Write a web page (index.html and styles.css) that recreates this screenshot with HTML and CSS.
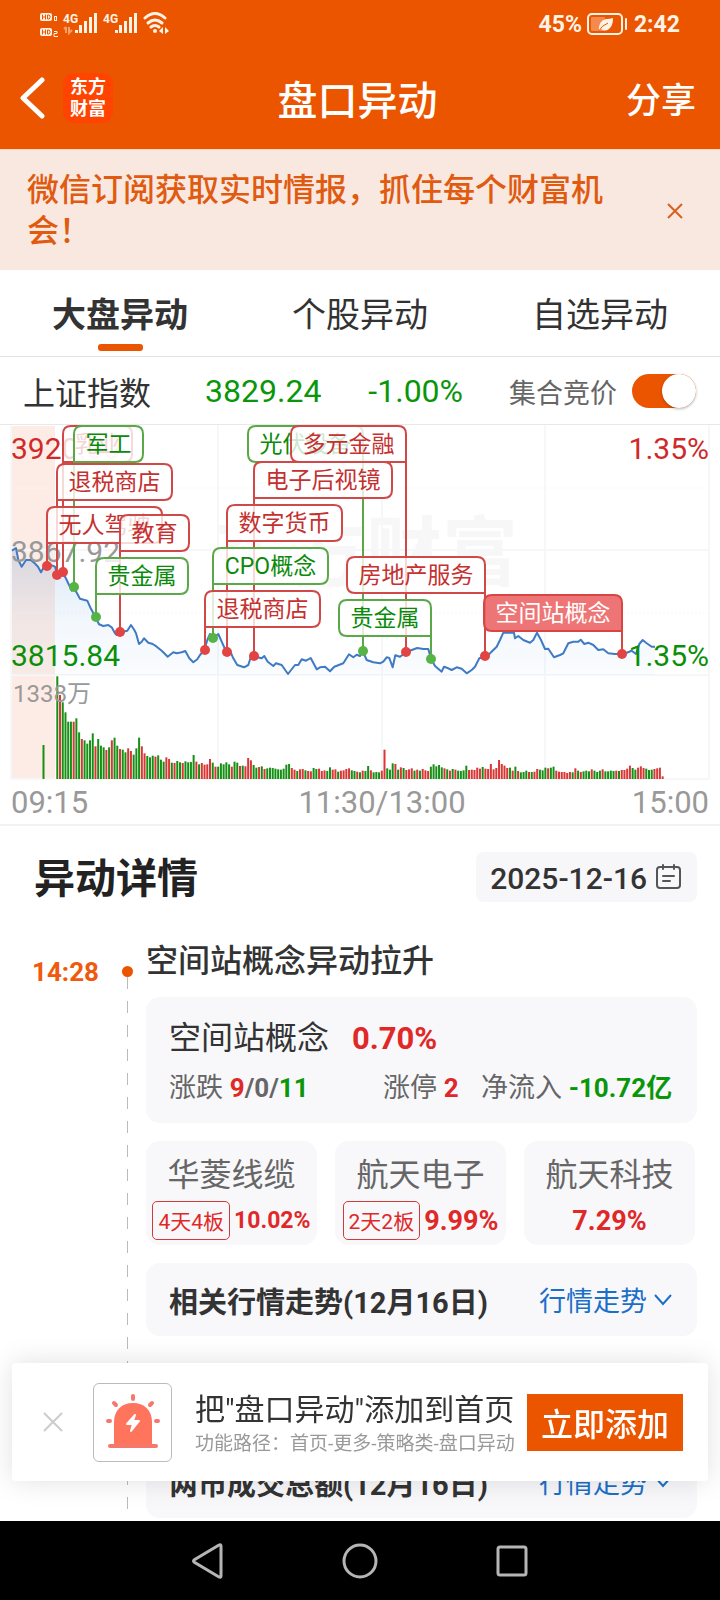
FILE: index.html
```html
<!DOCTYPE html>
<html lang="zh-CN">
<head>
  <meta charset="UTF-8">
  <meta name="viewport" content="width=device-width, initial-scale=1.0">
  <title>盘口异动</title>
  <link rel="stylesheet" href="styles.css">
</head>
<body>
  <header class="top">
    <div class="status">
      <svg class="status-icons" width="134" height="26" viewBox="0 0 134 26" fill="#fff3e6">
        <rect x="0" y="2" width="12" height="8" rx="2"/>
        <rect x="0" y="17" width="12" height="8" rx="2"/>
        <g fill="none" stroke="#eb5500" stroke-width="1">
          <path d="M2.500 3.500v5M5.500 3.500v5M2.500 6h3M7.500 4h1.500l1 1v2l-1 1h-1.500z"/>
          <path d="M2.500 18.500v5M5.500 18.500v5M2.500 21h3M7.500 19h1.500l1 1v2l-1 1h-1.500z"/>
        </g>
        <g fill="none" stroke="#fff3e6">
          <rect x="14.500" y="5.500" width="2" height="4"/>
          <path d="M14 20.500h3v2h-3v3h4"/>
        </g>
        <text class="net" x="23" y="12">4G</text>
        <path d="M26 16v6M24 18l2-2M29 16v6l3-3" stroke="#f7a06c" fill="none" stroke-width="2"/>
        <path d="M35 19h3v3h-3zM39 14h3v8h-3zM44 10h3v12h-3zM49 6h3v16h-3zM54 2h3v20h-3z"/>
        <text class="net" x="63" y="12">4G</text>
        <path d="M75 19h3v3h-3zM79 14h3v8h-3zM84 10h3v12h-3zM89 6h3v16h-3zM94 2h3v20h-3z"/>
        <g fill="none" stroke="#fff3e6" stroke-width="3" stroke-linecap="round">
          <path d="M105 7q10-9 20 0"/>
          <path d="M108 12q7-6 14 0"/>
          <path d="M111 16q4-3 8 0"/>
        </g>
        <circle cx="115" cy="20" r="2"/>
        <path d="M119 20l4-4v7zM125 16l4 4-4 3z"/>
      </svg>
      <div class="status-right">
        <span>45%</span>
        <svg width="42" height="22" viewBox="0 0 42 22">
          <rect x="1" y="1" width="34" height="20" rx="4" fill="none" stroke="#fff3e6" stroke-width="2"/>
          <rect x="4" y="4" width="14" height="14" rx="1" fill="#f58a4f"/>
          <path d="M12 18q-1-10 7-12q4 0 7-1q0 8-4 11q-4 3-8 0z" fill="#fff3e6"/>
          <path d="M11 19q4-7 10-9" stroke="#eb5500" fill="none"/>
          <rect x="38" y="5" width="2" height="12" rx="1" fill="#fff3e6"/>
        </svg>
        <span>2:42</span>
      </div>
    </div>
    <div class="navbar">
      <div class="navbar-left">
        <button class="back" aria-label="返回">
          <svg width="26" height="42" viewBox="0 0 26 42"><path d="M23 3L4 21l19 18" fill="none" stroke="#fff" stroke-width="5" stroke-linecap="round" stroke-linejoin="round"/></svg>
        </button>
        <div class="logo">东方<br>财富</div>
      </div>
      <h1>盘口异动</h1>
      <button class="share">分享</button>
    </div>
  </header>

  <div class="notice">
    <p>微信订阅获取实时情报，抓住每个财富机会！</p>
    <button class="notice-close" aria-label="关闭">
      <svg width="16" height="16" viewBox="0 0 16 16"><path d="M1 1l14 14M15 1L1 15" stroke="#d9601f" stroke-width="2" fill="none"/></svg>
    </button>
  </div>

  <nav class="tabs">
    <a class="active" href="#">大盘异动</a>
    <a href="#">个股异动</a>
    <a href="#">自选异动</a>
  </nav>

  <div class="index-row">
    <span class="index-name">上证指数</span>
    <span class="index-value green">3829.24</span>
    <span class="index-rate green">-1.00%</span>
    <label class="auction">集合竞价<input type="checkbox" class="switch" checked></label>
  </div>

  <section class="chart">
    <svg id="chart" viewBox="0 0 720 399">
      <defs>
        <linearGradient id="area" x1="0" y1="0" x2="0" y2="1">
          <stop offset="0" stop-color="#3b7cc9" stop-opacity=".2"/>
          <stop offset=".6" stop-color="#5a9be0" stop-opacity=".07"/>
          <stop offset="1" stop-color="#5a9be0" stop-opacity=".03"/>
        </linearGradient>
      </defs>
      <rect x="12" y="1" width="43" height="353" fill="#fdece5"/>
      <text class="mark" x="214" y="155">东方财富</text>
      <g class="grid">
        <path d="M11 0v354M218 0v354M382 0v354M545 0v354M709 0v354"/>
        <path d="M11 125h698M11 250h698M11 354h698"/>
        <path d="M11 63h698M11 188h698" stroke-width="1" stroke-dasharray="2 2"/>
      </g>
      <g id="volume"></g>
      <polygon id="priceArea" fill="url(#area)"/>
      <polyline id="priceLine" class="price"/>
      <g class="axis">
        <g class="level">
          <text class="red" x="11" y="34">3920.00</text>
          <text class="grey" x="11" y="137">3867.92</text>
          <text class="green" x="11" y="241">3815.84</text>
          <text class="red end" x="709" y="34">1.35%</text>
          <text class="green end" x="709" y="241">1.35%</text>
        </g>
        <text class="grey small" x="13" y="277">1338万</text>
        <text class="grey" x="11" y="388">09:15</text>
        <text class="grey middle" x="382" y="388">11:30/13:00</text>
        <text class="grey end" x="709" y="388">15:00</text>
      </g>
      <g id="flags"></g>
      <g id="dots"></g>
    </svg>
  </section>

  <main>
    <div class="detail-head">
      <h2>异动详情</h2>
      <button class="date">2025-12-16
        <svg width="26" height="26" viewBox="0 0 26 26" fill="none" stroke="#555" stroke-width="2" stroke-linecap="round"><rect x="1" y="3" width="23" height="21" rx="3"/><path d="M7 1v4M18 1v4M7 12h11M7 17h7"/></svg>
      </button>
    </div>

    <article class="event">
      <div class="rail"><time>14:28</time><i class="dot"></i></div>
      <div class="event-body">
        <h3>空间站概念异动拉升</h3>
        <div class="card board">
          <div class="board-name">空间站概念<b class="red">0.70%</b></div>
          <div class="board-stats">
            <span>涨跌 <b><i class="red">9</i>/0/<i class="green">11</i></b></span>
            <span>涨停 <b class="red">2</b></span>
            <span>净流入 <b class="green">-10.72亿</b></span>
          </div>
        </div>
        <div class="stocks">
          <div class="card stock">
            <div class="stock-name">华菱线缆</div>
            <div class="stock-rate"><span class="tag">4天4板</span><b class="long">10.02%</b></div>
          </div>
          <div class="card stock">
            <div class="stock-name">航天电子</div>
            <div class="stock-rate"><span class="tag">2天2板</span><b>9.99%</b></div>
          </div>
          <div class="card stock">
            <div class="stock-name">航天科技</div>
            <div class="stock-rate"><b>7.29%</b></div>
          </div>
        </div>
        <div class="card trend">
          <b>相关行情走势(12月16日)</b>
          <a href="#">行情走势<svg width="20" height="14" viewBox="0 0 20 14"><path d="M2 2l8 9 8-9" fill="none" stroke="#1b6fc8" stroke-width="2"/></svg></a>
        </div>
      </div>
    </article>

    <article class="event next">
      <div class="rail"></div>
      <div class="event-body">
        <div class="card trend">
          <b>两市成交总额(12月16日)</b>
          <a href="#">行情走势<svg width="20" height="14" viewBox="0 0 20 14"><path d="M2 2l8 9 8-9" fill="none" stroke="#1b6fc8" stroke-width="2"/></svg></a>
        </div>
      </div>
    </article>
  </main>

  <aside class="popup">
    <button class="popup-close" aria-label="关闭">
      <svg width="20" height="20" viewBox="0 0 20 20"><path d="M1 1l18 18M19 1L1 19" stroke="#ccc" stroke-width="2" fill="none"/></svg>
    </button>
    <div class="popup-icon">
      <svg width="56" height="56" viewBox="0 0 56 56" fill="#ff745c">
        <path d="M9 52V28C9 16 17 9 28 9S47 16 47 28V52z"/>
        <g stroke="#f5796a" stroke-linecap="round" stroke-width="4"><path d="M5 52h46M28 2v3M9 9l2 2M47 9l-2 2M3 27h2M51 27h2"/></g>
        <path d="M30 21l-8 9h6l-2 7 8-10h-6z" fill="#fff" stroke="#fff" stroke-width="2" stroke-linejoin="round"/>
      </svg>
    </div>
    <div class="popup-text">
      <strong>把"盘口异动"添加到首页</strong>
      <span>功能路径：首页-更多-策略类-盘口异动</span>
    </div>
    <button class="popup-add">立即添加</button>
  </aside>

  <footer class="sysbar">
    <button aria-label="后退"><svg width="36" height="36" viewBox="0 0 36 36"><path d="M31 3v30q0 2-2 1L4 19q-1-1 0-2L29 2q2-1 2 1z"/></svg></button>
    <button aria-label="主页"><svg width="36" height="36" viewBox="0 0 36 36"><circle cx="18" cy="18" r="16"/></svg></button>
    <button aria-label="任务"><svg width="36" height="36" viewBox="0 0 36 36"><rect x="4" y="4" width="28" height="28" rx="2"/></svg></button>
  </footer>

  <script src="chart.js"></script>
</body>
</html>
```
FILE: styles.css
```css
* {margin: 0; padding: 0; box-sizing: border-box;}
body {
  display: flex;
  flex-direction: column;
  min-height: 100vh;
  background: #fff;
  color: #333;
  font-family: Roboto, "Noto Sans CJK SC", sans-serif;
}
button {
  border: 0;
  background: none;
  color: inherit;
  font: inherit;
  cursor: pointer;
}
a {text-decoration: none;}
i {font-style: normal;}
svg {display: block;}
.red {color: #e02828; fill: #cf2a2a;}
.green {color: #0a960a; fill: #0a8f0a;}

/* 顶部 */
.top {
  background: #eb5500;
  color: #fff;
  border-bottom: 1px solid #ffd9bf;
}
.status {
  display: flex;
  justify-content: space-between;
  align-items: center;
  height: 48px;
  padding: 0 40px;
}
.net {font-size: 12px; font-weight: 700;}
.status-right {
  display: flex;
  align-items: center;
  gap: 5px;
  color: #fff3e6;
  font-size: 23px;
  font-weight: 700;
}
.navbar {
  display: grid;
  grid-template-columns: 1fr auto 1fr;
  align-items: center;
  height: 101px;
  padding: 0 24px 2px 19px;
}
.navbar-left {display: flex; align-items: center; gap: 18px;}
.logo {
  width: 50px;
  height: 50px;
  padding-top: 3px;
  border-radius: 11px;
  background: #ff4400;
  font-size: 18px;
  font-weight: 700;
  line-height: 22px;
  text-align: center;
}
.navbar h1 {font-size: 40px; font-weight: 500;}
.share {justify-self: end; font-size: 35px; font-weight: 500;}

.notice {
  display: flex;
  align-items: center;
  padding: 20px 29px 18px 27px;
  background: #f8e8e0;
}
.notice p {
  flex: 1;
  margin-right: 40px;
  color: #e05a10;
  font-size: 32px;
  font-weight: 500;
  line-height: 41px;
}
.notice-close {
  display: flex;
  justify-content: center;
  width: 32px;
}

.tabs {
  display: flex;
  height: 87px;
  border-bottom: 1px solid #e2e2e2;
}
.tabs a {
  position: relative;
  flex: 1;
  color: #333;
  font-size: 34px;
  line-height: 90px;
  text-align: center;
}
.tabs .active {font-weight: 700;}
.tabs .active::after {
  content: "";
  position: absolute;
  left: 50%;
  bottom: 5px;
  width: 45px;
  height: 7px;
  margin-left: -22px;
  border-radius: 3px;
  background: #eb5500;
}

.index-row {
  display: flex;
  align-items: center;
  height: 68px;
  padding: 1px 24px 0 23px;
  border-bottom: 1px solid #e8e8e8;
  font-size: 32px;
}
.index-value {margin-left: 54px;}
.index-rate {margin-left: 47px;}
.auction {
  display: flex;
  align-items: center;
  gap: 15px;
  margin-left: auto;
  color: #666;
  font-size: 27px;
}
.switch {
  appearance: none;
  display: flex;
  justify-content: flex-end;
  width: 64px;
  height: 34px;
  border-radius: 17px;
  background: #eb5500;
}
.switch::before {
  content: "";
  width: 34px;
  height: 34px;
  border-radius: 50%;
  background: #fff;
  box-shadow: 0 1px 3px rgba(0, 0, 0, .3);
}

/* 分时图 */
.chart {border-bottom: 2px solid #f3f3f3;}
.chart svg {width: 100%;}
.mark {fill: #f7f7f7; font-size: 76px; font-weight: 700;}
.grid {fill: none; stroke: #f6f7f8; stroke-width: 2;}
.price {fill: none; stroke: #3f7ac4; stroke-width: 2; stroke-linejoin: round;}
.axis {font-size: 31px;}
.level {font-size: 30px;}
.axis .grey {fill: #999;}
.axis .small {font-size: 24px;}
.axis .end {text-anchor: end;}
.axis .middle {text-anchor: middle;}
.flag path {fill: #fff; fill-opacity: .8; stroke-width: 2;}
.flag text {font-size: 23px; text-anchor: middle;}
.flag.up path {stroke: #d04848;}
.flag.up text {fill: #c53030;}
.flag.down path {stroke: #5aa848;}
.flag.down text {fill: #0a8a0a;}
.flag.on path {fill: #ec6666; fill-opacity: .9; stroke: #d94545;}
.flag.on text {fill: #fff;}

/* 异动详情 */
.detail-head {
  display: flex;
  justify-content: space-between;
  align-items: center;
  padding: 26px 23px 0 34px;
}
.detail-head h2 {
  padding-top: 4px;
  color: #222;
  font-size: 41px;
  line-height: 46px;
}
.date {
  display: flex;
  align-items: center;
  gap: 9px;
  height: 50px;
  padding: 3px 15px 0 14px;
  border-radius: 8px;
  background: #f7f7fa;
  font-size: 30px;
  font-weight: 500;
}
.date svg {margin-bottom: 3px;}
main {padding-bottom: 3px;}
.event {
  position: relative;
  display: grid;
  grid-template-columns: 146px 1fr;
  margin-top: 38px;
  padding: 0 23px 52px 0;
}
.event::before {
  content: "";
  position: absolute;
  top: 37px;
  bottom: 9px;
  left: 127px;
  width: 1px;
  background: repeating-linear-gradient(#bbb 0 12px, transparent 12px 24px);
}
.event.next {margin-top: 0; padding: 57px 23px 0 0;}
.event.next .trend {margin-top: 0;}
.rail {
  display: flex;
  justify-content: space-between;
  align-items: center;
  height: 32px;
  margin-top: 15px;
  padding: 0 13px 0 32px;
}
.rail time {
  padding-top: 2px;
  color: #ef5a0c;
  font-size: 26px;
  font-weight: 700;
}
.dot {
  width: 11px;
  height: 11px;
  border-radius: 50%;
  background: #eb5500;
}
.event h3 {padding-top: 1px; font-size: 32px; font-weight: 500; line-height: 40px;}
.event-body {min-width: 0;}
.card {border-radius: 14px; background: #f8f8fb;}
.board {margin-top: 16px; padding: 21px 23px 17px;}
.board-name {font-size: 32px; line-height: 40px;}
.board-name b {margin-left: 23px; font-size: 31px;}
.board-stats {
  display: grid;
  grid-template-columns: 214fr 98fr 193fr;
  margin-top: 11px;
  color: #666;
  font-size: 27px;
  line-height: 36px;
  white-space: nowrap;
}
.board-stats b {font-size: 26px;}
.stocks {
  display: grid;
  grid-template-columns: repeat(3, 1fr);
  gap: 18px;
  margin: 18px 2px 0 0;
}
.stock {padding: 14px 0 5px; text-align: center;}
.stock-name {color: #666; font-size: 32px; line-height: 40px;}
.stock-rate {
  display: flex;
  justify-content: center;
  align-items: center;
  gap: 4px;
  height: 39px;
  margin-top: 6px;
  color: #e02828;
  font-size: 27px;
}
.stock-rate .long {font-size: 23px;}
.tag {
  height: 39px;
  padding: 0 5px;
  border: 1px solid #d03a3a;
  border-radius: 5px;
  font-size: 21px;
  line-height: 40px;
}
.trend {
  display: flex;
  justify-content: space-between;
  align-items: center;
  height: 73px;
  margin-top: 18px;
  padding: 0 24px 0 23px;
}
.trend b {font-size: 29px;}
.trend a {
  display: flex;
  align-items: center;
  gap: 6px;
  color: #1b6fc8;
  font-size: 27px;
}

/* 底部弹窗 */
.popup {
  position: fixed;
  right: 12px;
  bottom: 119px;
  left: 12px;
  display: flex;
  align-items: center;
  height: 118px;
  padding: 0 25px 0 31px;
  border-radius: 4px;
  background: #fff;
  box-shadow: 0 0 28px rgba(0, 0, 0, .12);
}
.popup-icon {
  display: flex;
  justify-content: center;
  align-items: center;
  width: 79px;
  height: 79px;
  margin: 0 23px 0 30px;
  border: 1px solid #bbb;
  border-radius: 6px;
}
.popup-text {flex: 1; padding-top: 4px; white-space: nowrap;}
.popup-text strong {
  display: block;
  font-size: 30px;
  font-weight: 400;
  line-height: 40px;
}
.popup-text span {
  display: block;
  color: #999;
  font-size: 19px;
  line-height: 28px;
}
.popup-add {
  width: 156px;
  height: 57px;
  background: #eb5500;
  color: #fff;
  font-size: 32px;
  font-weight: 500;
}

.sysbar {
  display: flex;
  justify-content: center;
  align-items: center;
  gap: 116px;
  height: 80px;
  margin-top: auto;
  background: #000;
}
.sysbar svg {fill: none; stroke: #b5b5b5; stroke-width: 3;}
```
FILE: chart.js
```js
const NS = 'http://www.w3.org/2000/svg'

function add(parent, tag, attrs, text) {
  const el = document.createElementNS(NS, tag)
  for (const key in attrs) el.setAttribute(key, attrs[key])
  if (text) el.textContent = text
  parent.appendChild(el)
  return el
}

// 分时价格, 单位 1/3 px
const prices = '36,392 48,384 55,420 65,440 78,420 92,420 104,430 114,440 123,457 132,440 140,436 155,436 165,440 172,465 188,456 200,480 215,512 221,502 240,536 262,542 272,565 286,590 297,613 310,618 325,615 335,622 345,640 350,645 360,637 382,632 393,615 403,630 408,640 417,672 425,665 432,655 445,668 458,672 470,680 485,692 495,702 503,710 520,697 530,700 545,697 556,693 568,715 580,727 592,718 600,705 613,690 622,660 630,642 638,655 655,642 665,665 679,696 690,692 700,715 712,735 732,742 745,735 752,712 761,709 785,715 793,708 803,725 820,738 828,730 845,735 864,762 885,735 895,735 905,718 918,722 932,714 950,748 960,742 975,740 990,754 1003,740 1030,730 1047,703 1060,712 1070,704 1080,708 1088,693 1100,720 1120,727 1140,730 1150,725 1160,712 1168,714 1178,742 1186,706 1200,710 1219,696 1235,690 1252,684 1270,687 1285,687 1293,716 1305,738 1325,755 1332,740 1345,745 1355,750 1370,742 1385,746 1400,760 1415,750 1425,740 1438,715 1456,709 1470,700 1490,680 1500,660 1510,638 1542,638 1545,655 1555,648 1570,660 1590,668 1600,660 1611,638 1623,660 1635,687 1645,686 1662,712 1680,705 1690,700 1705,670 1720,665 1735,665 1742,659 1753,672 1765,668 1780,675 1795,690 1810,688 1825,700 1845,702 1865,702 1880,698 1895,692 1908,702 1918,672 1928,660 1938,668 1955,680 1965,680'
const line = prices.split(' ').map(p => {
  const [x, y] = p.split(',')
  return (x / 3).toFixed(1) + ',' + (y / 3 - 5).toFixed(1)
})
document.getElementById('priceLine').setAttribute('points', line.join(' '))
document.getElementById('priceArea').setAttribute('points', line.join(' ') + ' 655,250 12,250')

// 成交量, r 涨 g 跌
const volumes = '308g 252r 230g 200g 172g 172g 172r 182g 140g 120r 116g 106g 116g 137g 98r 120g 100g 95g 87r 95g 116r 124g 100g 90r 88g 80g 92r 84r 73g 92g 124g 98r 77r 69g 65g 70g 67r 71g 58g 52g 65r 60r 49g 48r 54g 50g 48r 53g 50g 51g 72g 52r 44g 48r 43r 44r 60r 49g 37r 37g 47g 44g 50g 44g 37r 52g 49g 39r 40g 38r 63r 56r 42g 34g 36r 38g 30r 32g 34g 33g 31g 29g 28g 31g 43g 45g 33r 28r 24g 29r 30r 26g 24r 23r 33g 30g 31r 24r 26r 24g 35g 28r 29r 22g 25r 26r 30r 32r 26g 24g 22r 20g 25r 24g 39g 26r 20g 21g 20g 25r 88r 32g 28g 47g 45r 28g 35r 33g 27r 29r 32r 25g 28r 25g 30r 26r 24r 37g 44g 38g 42g 35g 32r 29g 25r 30g 28r 25g 24g 26g 40g 27r 28r 27r 34r 31r 36g 31r 30r 45r 29r 33r 57r 45r 40r 33r 34g 25r 37g 24r 20g 21g 25g 21r 21g 22r 30r 28g 26g 34g 32r 34g 37g 25r 22r 21r 21r 18r 21r 20g 32r 25g 21r 23g 25g 23g 29r 25g 21g 25g 29r 23g 23g 25g 24g 25r 24g 27r 27r 31r 40r 33g 28g 34r 38r 33r 31g 27g 28g 30r 32r 34r 8r'.split(' ')
const volume = document.getElementById('volume')
const step = (1988 - 172) / 3 / (volumes.length - 1)
function bar(x, h, color) {
  add(volume, 'rect', {x: x - 1, y: 354 - h, width: 2, height: h, fill: color === 'r' ? '#d93636' : '#159015'})
}
bar(43.5, 34, 'g')
volumes.forEach((v, i) => bar(57.3 + i * step, parseInt(v) / 3, v.slice(-1)))

// 文字, x, y, 宽, 旗杆在右, 类型, 圆点 y
const flags = [
  ['乳业', 63, 0, 69, 0, 'up', 147],
  ['军工', 74, 0, 69, 0, 'down', 162],
  ['退税商店', 57, 38, 115, 0, 'up', 150],
  ['无人驾驶', 47, 81, 115, 0, 'up', 141],
  ['教育', 120, 89, 69, 0, 'up', 207],
  ['贵金属', 96, 132, 92, 0, 'down', 192],
  ['光伏设备', 248, 0, 115, 1, 'down', 226],
  ['电子后视镜', 254, 36, 138, 0, 'up', 231],
  ['多元金融', 291, 0, 115, 1, 'up', 227],
  ['数字货币', 227, 79, 115, 0, 'up', 227],
  ['CPO概念', 213, 122, 115, 0, 'down', 213],
  ['退税商店', 205, 165, 115, 0, 'up', 225],
  ['房地产服务', 347, 131, 138, 1, 'up', 231],
  ['贵金属', 339, 174, 92, 1, 'down', 234],
  ['空间站概念', 484, 169, 138, 1, 'up on', 229]
]
const flagBox = document.getElementById('flags')
const dots = document.getElementById('dots')
flags.forEach(([text, x, y, w, right, type, dotY]) => {
  const g = add(flagBox, 'g', {class: 'flag ' + type})
  const top = y + 1
  const pole = right ? x + w : x
  const d = right
    ? `M${x + w} ${top + 36}h${8 - w}q-8 0-8-8v-20q0-8 8-8h${w - 16}q8 0 8 8V${dotY}`
    : `M${x} ${top + 36}h${w - 8}q8 0 8-8v-20q0-8-8-8h${16 - w}q-8 0-8 8V${dotY}`
  add(g, 'path', {d})
  add(g, 'text', {x: x + w / 2, y: top + 26}, text)
  add(dots, 'circle', {cx: pole, cy: dotY, r: 5, fill: type === 'down' ? '#56b446' : '#e24444'})
})
```
